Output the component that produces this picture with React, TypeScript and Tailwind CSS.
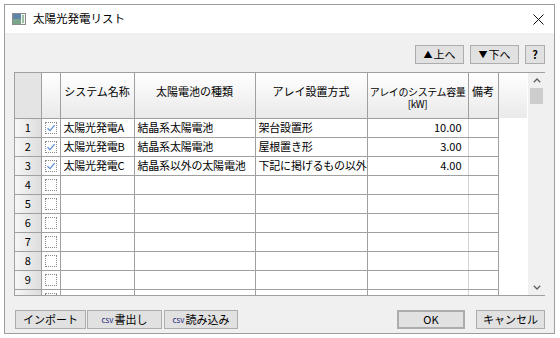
import { Fragment } from 'react'

type Row = {
  checked: boolean
  name: string
  type: string
  method: string
  capacity: string
}

const rows: Row[] = [
  { checked: true, name: '太陽光発電A', type: '結晶系太陽電池', method: '架台設置形', capacity: '10.00' },
  { checked: true, name: '太陽光発電B', type: '結晶系太陽電池', method: '屋根置き形', capacity: '3.00' },
  { checked: true, name: '太陽光発電C', type: '結晶系以外の太陽電池', method: '下記に掲げるもの以外', capacity: '4.00' },
  ...Array.from({ length: 7 }, () => ({ checked: false, name: '', type: '', method: '', capacity: '' })),
]

function CheckCell({ checked }: { checked: boolean }) {
  return (
    <div className="ml-[3px] w-[12px] h-[12px] border border-dotted border-[#8a8a8a] bg-white flex items-center justify-center">
      {checked && (
        <svg width="10" height="10" viewBox="0 0 10 10">
          <path d="M1.5 5.2 L4 7.6 L8.6 2.2" fill="none" stroke="#5b8fd4" strokeWidth="1.3" />
        </svg>
      )}
    </div>
  )
}

function WinButton({ children, className = '' }: { children: React.ReactNode; className?: string }) {
  return (
    <button
      type="button"
      className={`h-[19px] bg-[#e1e1e1] border border-[#adadad] flex items-center justify-center text-[11px] leading-none text-black ${className}`}
    >
      {children}
    </button>
  )
}

export default function App() {
  const font = "font-['Meiryo','Noto_Sans_CJK_JP',sans-serif]"
  const hdr = 'border-r border-b border-[#a0a0a0] bg-gradient-to-b from-white to-[#e9e9e9] align-top pt-[13px] text-center font-normal whitespace-nowrap overflow-hidden'
  const cell = 'border-r border-b border-[#a0a0a0] px-[3px] whitespace-nowrap overflow-hidden tracking-[-0.2px]'

  return (
    <div className={`w-[560px] h-[338px] bg-white pt-[4px] pl-[4px] ${font} text-black`}>
      <div className="w-[551px] h-[330px] border border-[#9d9d9d] bg-[#f0f0f0] flex flex-col">
        {/* title bar */}
        <div className="h-[28px] bg-white flex items-center pl-[7px] pr-[10px]">
          <svg width="14" height="12" viewBox="0 0 14 12">
            <rect x="0.5" y="0.5" width="13" height="11" fill="#f4f4f4" stroke="#8c8c8c" />
            <rect x="1" y="1" width="8" height="10" fill="#5f86a8" />
            <rect x="1" y="6" width="8" height="5" fill="#7aa58a" />
            <rect x="10" y="2" width="2" height="8" fill="#9cc4a4" />
          </svg>
          <span className="ml-[7px] text-[11.5px] leading-none">太陽光発電リスト</span>
          <svg className="ml-auto" width="11" height="11" viewBox="0 0 11 11">
            <path d="M0.5 0.5 L10.5 10.5 M10.5 0.5 L0.5 10.5" stroke="#111" strokeWidth="1" />
          </svg>
        </div>

        <div className="flex-1 flex flex-col px-[9px]">
          {/* top buttons */}
          <div className="mt-[12px] flex justify-end gap-[6px]">
            <WinButton className="w-[49px]">
              <span className="text-[9px] mr-[1px]">▲</span>上へ
            </WinButton>
            <WinButton className="w-[49px]">
              <span className="text-[9px] mr-[1px]">▼</span>下へ
            </WinButton>
            <WinButton className="w-[20px] text-[#1a2a6a] font-bold">?</WinButton>
          </div>

          {/* grid */}
          <div className="mt-[8px] h-[224px] flex border-l border-t border-b border-[#a0a0a0]">
            <div className="flex-1 bg-white overflow-hidden">
              <table className="w-[512px] table-fixed border-collapse text-[11px] leading-none">
                <colgroup>
                  <col className="w-[26px]" />
                  <col className="w-[19px]" />
                  <col className="w-[74px]" />
                  <col className="w-[121px]" />
                  <col className="w-[112px]" />
                  <col className="w-[101px]" />
                  <col className="w-[30px]" />
                  <col className="w-[29px]" />
                </colgroup>
                <thead>
                  <tr className="h-[45px]">
                    <th className="border-r border-b border-[#a0a0a0] bg-[#e4e4e4]" />
                    <th className={hdr} />
                    <th className={hdr}>システム名称</th>
                    <th className={hdr}>太陽電池の種類</th>
                    <th className={hdr}>アレイ設置方式</th>
                    <th className={`${hdr} leading-[12px] text-[10px] tracking-[-0.4px]`}>
                      アレイのシステム容量
                      <br />
                      [kW]
                    </th>
                    <th className={hdr}>備考</th>
                    <th className="bg-gradient-to-b from-white to-[#e9e9e9]" />
                  </tr>
                </thead>
                <tbody>
                  {rows.map((r, i) => (
                    <Fragment key={i}>
                      <tr className="h-[19px]">
                        <td className="border-r border-b border-[#a0a0a0] bg-gradient-to-r from-[#f6f6f6] to-[#dddddd] text-center text-[11px]">
                          {i + 1}
                        </td>
                        <td className="border-r border-b border-[#a0a0a0]">
                          <CheckCell checked={r.checked} />
                        </td>
                        <td className={cell}>{r.name}</td>
                        <td className={cell}>{r.type}</td>
                        <td className={cell}>{r.method}</td>
                        <td className="border-r border-b border-r-[#d4d4d4] border-b-[#a0a0a0] text-right pr-[6px] text-[11px]">
                          {r.capacity}
                        </td>
                        <td className="border-r border-b border-[#a0a0a0]" />
                        <td />
                      </tr>
                    </Fragment>
                  ))}
                </tbody>
              </table>
            </div>
            {/* vertical scrollbar */}
            <div className="w-[17px] flex flex-col items-center bg-[#f0f0f0]">
              <div className="h-[15px] flex items-center justify-center">
                <svg width="8" height="5" viewBox="0 0 8 5">
                  <path d="M0.8 4.2 L4 1 L7.2 4.2" fill="none" stroke="#606060" strokeWidth="1.3" />
                </svg>
              </div>
              <div className="w-[13px] h-[16px] bg-[#cdcdcd]" />
              <div className="flex-1" />
              <div className="h-[15px] flex items-center justify-center">
                <svg width="8" height="5" viewBox="0 0 8 5">
                  <path d="M0.8 0.8 L4 4 L7.2 0.8" fill="none" stroke="#606060" strokeWidth="1.3" />
                </svg>
              </div>
            </div>
          </div>

          {/* bottom buttons */}
          <div className="mt-[14px] flex items-center">
            <WinButton className="w-[71px] ml-[1px]">インポート</WinButton>
            <WinButton className="w-[75px] ml-[1px]">
              <span className="text-[8px] text-[#1a2a7a] mr-[1px]">csv</span>書出し
            </WinButton>
            <WinButton className="w-[74px] ml-[2px]">
              <span className="text-[8px] text-[#1a2a7a] mr-[1px]">csv</span>読み込み
            </WinButton>
            <WinButton className="w-[68px] ml-auto border-[#0078d7] border-[2px]">OK</WinButton>
            <WinButton className="w-[69px] ml-[11px]">キャンセル</WinButton>
          </div>
        </div>
      </div>
    </div>
  )
}
